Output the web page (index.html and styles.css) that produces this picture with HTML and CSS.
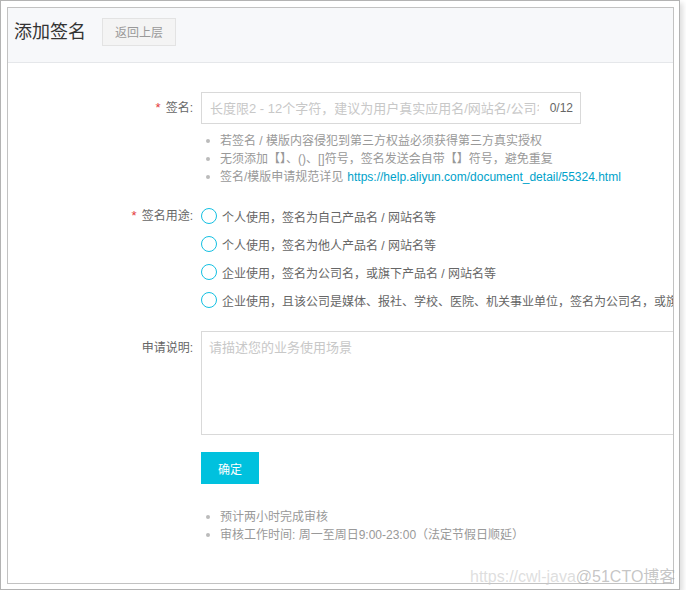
FILE: index.html
```html
<!DOCTYPE html>
<html lang="zh">
<head>
<meta charset="utf-8">
<title>添加签名</title>
<link rel="stylesheet" href="styles.css">
</head>
<body>
<div class="frame">
  <div class="page">
    <div class="header">
      <h1 class="title">添加签名</h1>
      <button class="back-btn">返回上层</button>
    </div>
    <div class="form">
      <div class="row">
        <label class="label label-input"><span class="req">*</span>签名:</label>
        <div class="control">
          <div class="input-wrap">
            <input class="input" type="text" placeholder="长度限2 - 12个字符，建议为用户真实应用名/网站名/公司名">
            <span class="counter">0/12</span>
          </div>
          <ul class="tips">
            <li>若签名 / 模版内容侵犯到第三方权益必须获得第三方真实授权</li>
            <li>无须添加【】、()、[]符号，签名发送会自带【】符号，避免重复</li>
            <li>签名/模版申请规范详见 <a class="link" href="#">https://help.aliyun.com/document_detail/55324.html</a></li>
          </ul>
        </div>
      </div>
      <div class="row row-radio">
        <label class="label label-radio"><span class="req">*</span>签名用途:</label>
        <div class="control">
          <div class="radio"><span class="circle"></span><span class="radio-text">个人使用，签名为自己产品名 / 网站名等</span></div>
          <div class="radio"><span class="circle"></span><span class="radio-text">个人使用，签名为他人产品名 / 网站名等</span></div>
          <div class="radio"><span class="circle"></span><span class="radio-text">企业使用，签名为公司名，或旗下产品名 / 网站名等</span></div>
          <div class="radio"><span class="circle"></span><span class="radio-text">企业使用，且该公司是媒体、报社、学校、医院、机关事业单位，签名为公司名，或旗下产品名 / 网站名等</span></div>
        </div>
      </div>
      <div class="row row-text">
        <label class="label label-area">申请说明:</label>
        <div class="control">
          <textarea class="textarea" placeholder="请描述您的业务使用场景"></textarea>
        </div>
      </div>
      <div class="row row-btn">
        <div></div>
        <div class="control">
          <button class="submit">确定</button>
          <ul class="tips notes">
            <li>预计两小时完成审核</li>
            <li>审核工作时间: 周一至周日9:00-23:00（法定节假日顺延）</li>
          </ul>
        </div>
      </div>
    </div>
  </div>
  <div class="watermark"><span class="wm-light">https://cwl-java</span><span class="wm-dark">@51CTO博客</span></div>
</div>
</body>
</html>
```

FILE: styles.css
```css
* { box-sizing: border-box; }
html, body { margin: 0; padding: 0; background: #ffffff; }
body {
  font-family: "Liberation Sans", "Noto Sans CJK SC", sans-serif;
  font-size: 12px;
  color: #666;
}
.frame {
  position: relative;
  width: 680px;
  height: 590px;
  border: 1px solid #b3b3b3;
  padding: 6px 5px 5px 6px;
  background: #fff;
  box-shadow: 3px 3px 5px rgba(0, 0, 0, 0.13);
}
.page {
  width: 667px;
  height: 577px;
  border: 1px solid #c2c2c2;
  overflow: hidden;
  background: #fff;
}
.header {
  height: 55px;
  background: #f7f8fa;
  border-bottom: 1px solid #e5e7ea;
  display: flex;
  align-items: center;
  padding: 0 0 7px 6px;
}
.title {
  margin: 0;
  font-size: 18px;
  font-weight: normal;
  color: #333;
  line-height: 28px;
}
.back-btn {
  margin-left: 16px;
  width: 74px;
  height: 28px;
  border: 1px solid #e3e3e3;
  background: #f4f4f4;
  color: #999;
  font-family: inherit;
  font-size: 12px;
  padding: 0;
}
.form { padding-top: 29px; }
.row {
  display: grid;
  grid-template-columns: 185px 1fr;
  column-gap: 8px;
}
.label {
  text-align: right;
  color: #666;
  font-size: 12px;
}
.req { color: #e4393c; margin-right: 5px; font-size: 13px; }
.label-input { line-height: 32px; }
.label-radio { line-height: 28px; }
.label-area { line-height: 18px; padding-top: 8px; }
.input-wrap {
  position: relative;
  width: 380px;
  height: 32px;
}
.input {
  width: 100%;
  height: 32px;
  border: 1px solid #d9d9d9;
  padding: 0 41px 0 8px;
  font-family: inherit;
  font-size: 13px;
  color: #333;
  outline: none;
}
.input::placeholder, .textarea::placeholder { color: #c8c8c8; }
.counter {
  position: absolute;
  right: 8px;
  top: 1px;
  line-height: 30px;
  font-size: 12px;
  color: #666;
  background: #fff;
  padding-left: 9px;
}
.tips {
  list-style: none;
  margin: 8px 0 0;
  padding: 0;
  color: #999;
  line-height: 18px;
}
.tips li { display: flex; align-items: center; white-space: nowrap; }
.tips li::before {
  content: "";
  flex: none;
  width: 4px;
  height: 4px;
  border-radius: 50%;
  background: #bbb;
  margin: 0 10px 0 5px;
}
.link { color: #00a2ca; text-decoration: none; margin-left: 4px; }
.row-radio { margin-top: 16px; }
.radio {
  display: flex;
  align-items: center;
  height: 28px;
  white-space: nowrap;
}
.circle {
  flex: none;
  width: 16px;
  height: 16px;
  border: 1px solid #14c0e2;
  border-radius: 50%;
  margin-right: 5px;
  background: #fff;
}
.radio-text { color: #666; }
.row-text { margin-top: 17px; }
.textarea {
  display: block;
  width: 520px;
  height: 104px;
  border: 1px solid #d9d9d9;
  padding: 7px 7px;
  font-family: inherit;
  font-size: 13px;
  line-height: 18px;
  resize: none;
  outline: none;
}
.row-btn { margin-top: 17px; }
.submit {
  display: block;
  width: 58px;
  height: 32px;
  border: none;
  background: #00c1de;
  color: #fff;
  font-family: inherit;
  font-size: 12px;
  padding: 0;
}
.notes { margin-top: 24px; }
.watermark {
  position: absolute;
  left: 469px;
  top: 566px;
  font-size: 16px;
  line-height: 20px;
  white-space: nowrap;
}
.wm-light { color: rgba(200, 200, 200, 0.6); }
.wm-dark { color: rgba(160, 160, 160, 0.6); }
```
